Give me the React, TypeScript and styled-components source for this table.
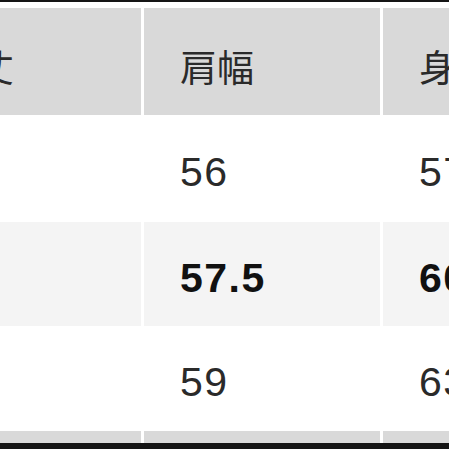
import React from "react";
import styled, { createGlobalStyle } from "styled-components";

const Global = createGlobalStyle`
  html, body {
    margin: 0;
    padding: 0;
    background: #ffffff;
    overflow: hidden;
  }
  #root {
    width: 449px;
    height: 449px;
    overflow: hidden;
  }
`;

const Frame = styled.div`
  width: 449px;
  height: 449px;
  box-sizing: border-box;
  border-top: 2px solid #151515;
  display: flex;
  flex-direction: column;
  overflow: hidden;
`;

const Table = styled.div`
  margin-top: 6px;
  margin-left: -96px;
  display: grid;
  grid-template-columns: 237px 236px 236px;
  grid-template-rows: 107px 107px 104px 105px 12px;
  column-gap: 3px;
`;

type Tone = "head" | "plain" | "stripe";

const toneBg: Record<Tone, string> = {
  head: "#d9d9d9",
  plain: "#ffffff",
  stripe: "#f4f4f4",
};

const Cell = styled.div<{ $tone: Tone; $bold?: boolean }>`
  background: ${(p) => toneBg[p.$tone]};
  display: flex;
  align-items: center;
  padding: 8px 0 0 36px;
  box-sizing: border-box;
  overflow: hidden;
  white-space: nowrap;
  color: ${(p) => (p.$bold ? "#111111" : "#2a2a2a")};
  font-family: ${(p) =>
    p.$tone === "head"
      ? `"Noto Sans CJK JP", "Noto Sans", sans-serif`
      : `"Liberation Sans", Arial, sans-serif`};
  font-size: ${(p) => (p.$tone === "head" ? "37px" : "41px")};
  font-weight: ${(p) => (p.$bold ? 700 : 400)};
  letter-spacing: ${(p) => (p.$tone === "head" ? "0" : "1.5px")};
`;

const BottomBar = styled.div`
  height: 6px;
  background: #141414;
`;

const header = ["着丈", "肩幅", "身幅"];
const rows: { tone: Tone; bold?: boolean; values: string[] }[] = [
  { tone: "plain", values: ["70", "56", "57"] },
  { tone: "stripe", bold: true, values: ["72", "57.5", "60"] },
  { tone: "plain", values: ["74", "59", "63"] },
  { tone: "head", values: ["", "", ""] },
];

export default function App() {
  return (
    <>
      <Global />
      <Frame>
        <Table>
          {header.map((h) => (
            <Cell key={h} $tone="head">
              {h}
            </Cell>
          ))}
          {rows.map((r, i) =>
            r.values.map((v, j) => (
              <Cell key={`${i}-${j}`} $tone={r.tone} $bold={r.bold}>
                {v}
              </Cell>
            ))
          )}
        </Table>
        <BottomBar />
      </Frame>
    </>
  );
}
